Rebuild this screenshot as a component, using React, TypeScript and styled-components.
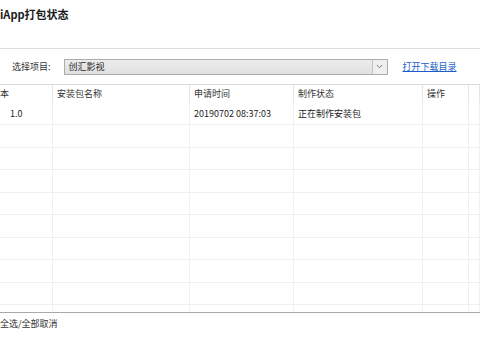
import * as React from 'react'
import styled, { createGlobalStyle } from 'styled-components'

const GlobalStyle = createGlobalStyle`
body {
  margin: 0;
  background: #fff;
  font-family: "Noto Sans CJK SC", "Noto Sans", sans-serif;
  font-size: 9px;
  color: #222;
}
`

const Page = styled.div`
width: 480px;
height: 340px;
overflow: hidden;
background: #fff;
`

const TitleBar = styled.div`
box-sizing: border-box;
height: 49px;
padding-top: 6px;
border-bottom: 1px solid #dedede;
font-size: 11px;
font-weight: bold;
color: #1a1a1a;
white-space: nowrap;
`

const Toolbar = styled.div`
box-sizing: border-box;
height: 35px;
display: flex;
align-items: center;
padding-left: 12px;
`

const Label = styled.span`
color: #333;
`

const Select = styled.div`
box-sizing: border-box;
margin-left: 13px;
width: 324px;
height: 16px;
display: flex;
align-items: stretch;
border: 1px solid #acacac;
background: linear-gradient(#ececec, #e1e1e1);
`

const SelectText = styled.div`
flex: 1;
display: flex;
align-items: center;
padding-left: 4px;
color: #2a2a2a;
`

const SelectButton = styled.div`
width: 14px;
display: flex;
align-items: center;
justify-content: center;
border-left: 1px solid #c4c4c4;
background: #efefef;
`

const Link = styled.a`
margin-left: 15px;
color: #1a5dc8;
text-decoration: underline;
cursor: pointer;
`

const Table = styled.div`
box-sizing: border-box;
height: 229px;
overflow: hidden;
border-top: 1px solid #dcdcdc;
border-bottom: 1px solid #a9a9a9;
`

const Row = styled.div<{ $head?: boolean }>`
box-sizing: border-box;
display: flex;
height: ${p => (p.$head ? '17.5px' : '22.5px')};
border-bottom: ${p => (p.$head ? 'none' : '1px solid #f0f0f0')};
`

const Cell = styled.div<{ $w?: number; $head?: boolean; $pad?: number }>`
box-sizing: border-box;
${p => (p.$w ? `width: ${p.$w}px;` : 'flex: 1;')}
display: flex;
align-items: center;
padding-left: ${p => (p.$pad !== undefined ? p.$pad : 4)}px;
border-right: 1px solid ${p => (p.$head ? '#e6e6e6' : '#f0f0f0')};
color: ${p => (p.$head ? '#333' : '#222')};
white-space: nowrap;
overflow: hidden;
`

const Footer = styled.div`
padding-top: 4px;
color: #333;
white-space: nowrap;
`

const widths = [53, 137, 104, 129, 46]

const Chevron = () => (
  <svg width="7" height="5" viewBox="0 0 7 5">
    <path d="M0.8 1 L3.5 3.8 L6.2 1" fill="none" stroke="#7a7a7a" strokeWidth="1" />
  </svg>
)

const rows = [
  { ver: '1.0', name: '', time: '20190702 08:37:03', status: '正在制作安装包', op: '' },
  ...Array.from({ length: 9 }, () => ({ ver: '', name: '', time: '', status: '', op: '' })),
]

export default function App() {
  return (
    <Page>
      <GlobalStyle />
      <TitleBar>iApp打包状态</TitleBar>
      <Toolbar>
        <Label>选择项目:</Label>
        <Select>
          <SelectText>创汇影视</SelectText>
          <SelectButton>
            <Chevron />
          </SelectButton>
        </Select>
        <Link>打开下载目录</Link>
      </Toolbar>
      <Table>
        <Row $head>
          <Cell $head $w={widths[0]} $pad={0}>本</Cell>
          <Cell $head $w={widths[1]}>安装包名称</Cell>
          <Cell $head $w={widths[2]}>申请时间</Cell>
          <Cell $head $w={widths[3]}>制作状态</Cell>
          <Cell $head $w={widths[4]}>操作</Cell>
          <Cell $head />
        </Row>
        {rows.map((r, i) => (
          <Row key={i}>
            <Cell $w={widths[0]} $pad={10}>{r.ver}</Cell>
            <Cell $w={widths[1]}>{r.name}</Cell>
            <Cell $w={widths[2]}>{r.time}</Cell>
            <Cell $w={widths[3]}>{r.status}</Cell>
            <Cell $w={widths[4]}>{r.op}</Cell>
            <Cell />
          </Row>
        ))}
      </Table>
      <Footer>全选/全部取消</Footer>
    </Page>
  )
}
